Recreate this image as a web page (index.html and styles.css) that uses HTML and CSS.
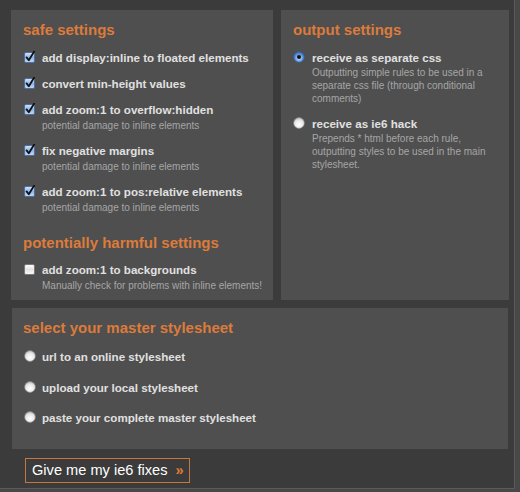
FILE: index.html
```html
<!DOCTYPE html>
<html>
<head>
<meta charset="utf-8">
<link rel="stylesheet" href="styles.css">
</head>
<body>
<div class="frame">
  <div class="top">
    <div class="panel panel-left">
      <h2 class="heading">safe settings</h2>
      <div class="opt">
        <span class="box checked"><svg viewBox="0 0 12 12" width="12" height="12"><defs><linearGradient id="cb" x1="0" y1="0" x2="0" y2="1"><stop offset="0" stop-color="#d6e6fb"/><stop offset="0.5" stop-color="#8eb6ea"/><stop offset="1" stop-color="#c3dbf7"/></linearGradient></defs><rect x="0.5" y="1.5" width="10" height="10" rx="1.5" fill="url(#cb)" stroke="#4f6f9e"/><path d="M2.6 6.4 L4.8 9.2 L10.2 0.6" fill="none" stroke="#111" stroke-width="1.8" stroke-linecap="round" stroke-linejoin="round"/></svg></span>
        <div class="txt"><div class="label">add display:inline to floated elements</div></div>
      </div>
      <div class="opt">
        <span class="box checked"><svg viewBox="0 0 12 12" width="12" height="12"><rect x="0.5" y="1.5" width="10" height="10" rx="1.5" fill="url(#cb)" stroke="#4f6f9e"/><path d="M2.6 6.4 L4.8 9.2 L10.2 0.6" fill="none" stroke="#111" stroke-width="1.8" stroke-linecap="round" stroke-linejoin="round"/></svg></span>
        <div class="txt"><div class="label">convert min-height values</div></div>
      </div>
      <div class="opt">
        <span class="box checked"><svg viewBox="0 0 12 12" width="12" height="12"><rect x="0.5" y="1.5" width="10" height="10" rx="1.5" fill="url(#cb)" stroke="#4f6f9e"/><path d="M2.6 6.4 L4.8 9.2 L10.2 0.6" fill="none" stroke="#111" stroke-width="1.8" stroke-linecap="round" stroke-linejoin="round"/></svg></span>
        <div class="txt"><div class="label">add zoom:1 to overflow:hidden</div><div class="sub">potential damage to inline elements</div></div>
      </div>
      <div class="opt">
        <span class="box checked"><svg viewBox="0 0 12 12" width="12" height="12"><rect x="0.5" y="1.5" width="10" height="10" rx="1.5" fill="url(#cb)" stroke="#4f6f9e"/><path d="M2.6 6.4 L4.8 9.2 L10.2 0.6" fill="none" stroke="#111" stroke-width="1.8" stroke-linecap="round" stroke-linejoin="round"/></svg></span>
        <div class="txt"><div class="label">fix negative margins</div><div class="sub">potential damage to inline elements</div></div>
      </div>
      <div class="opt">
        <span class="box checked"><svg viewBox="0 0 12 12" width="12" height="12"><rect x="0.5" y="1.5" width="10" height="10" rx="1.5" fill="url(#cb)" stroke="#4f6f9e"/><path d="M2.6 6.4 L4.8 9.2 L10.2 0.6" fill="none" stroke="#111" stroke-width="1.8" stroke-linecap="round" stroke-linejoin="round"/></svg></span>
        <div class="txt"><div class="label">add zoom:1 to pos:relative elements</div><div class="sub">potential damage to inline elements</div></div>
      </div>
      <h2 class="heading heading-2">potentially harmful settings</h2>
      <div class="opt">
        <span class="box"><svg viewBox="0 0 12 12" width="12" height="12"><defs><linearGradient id="ub" x1="0" y1="0" x2="0" y2="1"><stop offset="0" stop-color="#ffffff"/><stop offset="0.5" stop-color="#e4e4e4"/><stop offset="1" stop-color="#fafafa"/></linearGradient></defs><rect x="0.5" y="1.5" width="10" height="10" rx="1.5" fill="url(#ub)" stroke="#7a7a7a"/></svg></span>
        <div class="txt"><div class="label">add zoom:1 to backgrounds</div><div class="sub">Manually check for problems with inline elements!</div></div>
      </div>
    </div>
    <div class="panel panel-right">
      <h2 class="heading">output settings</h2>
      <div class="opt ropt">
        <span class="radio"><svg viewBox="0 0 12 12" width="12" height="12"><defs><radialGradient id="rs" cx="0.5" cy="0.6" r="0.6"><stop offset="0" stop-color="#d8ecff"/><stop offset="0.6" stop-color="#5d95dc"/><stop offset="1" stop-color="#2f5fa8"/></radialGradient></defs><circle cx="6" cy="6" r="5.4" fill="url(#rs)" stroke="#3a5c91" stroke-width="0.8"/><circle cx="6" cy="6" r="2" fill="#111"/></svg></span>
        <div class="txt"><div class="label">receive as separate css</div><div class="desc">Outputting simple rules to be used in a separate css file (through conditional comments)</div></div>
      </div>
      <div class="opt ropt">
        <span class="radio"><svg viewBox="0 0 12 12" width="12" height="12"><defs><radialGradient id="ru" cx="0.5" cy="0.65" r="0.6"><stop offset="0" stop-color="#ffffff"/><stop offset="0.7" stop-color="#e6e6e6"/><stop offset="1" stop-color="#bdbdbd"/></radialGradient></defs><circle cx="6" cy="6" r="5.4" fill="url(#ru)" stroke="#8a8a8a" stroke-width="0.6"/></svg></span>
        <div class="txt"><div class="label">receive as ie6 hack</div><div class="desc">Prepends * html before each rule, outputting styles to be used in the main stylesheet.</div></div>
      </div>
    </div>
  </div>
  <div class="panel panel-bottom">
    <h2 class="heading">select your master stylesheet</h2>
    <div class="opt bopt">
      <span class="radio"><svg viewBox="0 0 12 12" width="12" height="12"><circle cx="6" cy="6" r="5.4" fill="url(#ru)" stroke="#8a8a8a" stroke-width="0.6"/></svg></span>
      <div class="txt"><div class="label">url to an online stylesheet</div></div>
    </div>
    <div class="opt bopt">
      <span class="radio"><svg viewBox="0 0 12 12" width="12" height="12"><circle cx="6" cy="6" r="5.4" fill="url(#ru)" stroke="#8a8a8a" stroke-width="0.6"/></svg></span>
      <div class="txt"><div class="label">upload your local stylesheet</div></div>
    </div>
    <div class="opt bopt">
      <span class="radio"><svg viewBox="0 0 12 12" width="12" height="12"><circle cx="6" cy="6" r="5.4" fill="url(#ru)" stroke="#8a8a8a" stroke-width="0.6"/></svg></span>
      <div class="txt"><div class="label">paste your complete master stylesheet</div></div>
    </div>
  </div>
  <div class="actions">
    <button class="go">Give me my ie6 fixes <span class="arrows">»</span></button>
  </div>
</div>
</body>
</html>
```

FILE: styles.css
```css
html, body {
  margin: 0;
  padding: 0;
}
body {
  background: #484848;
  font-family: "Liberation Sans", Arial, sans-serif;
  width: 520px;
  height: 492px;
  overflow: hidden;
}
.frame {
  box-sizing: border-box;
  width: 515px;
  height: 489px;
  background: #3b3b3b;
  border-right: 1px solid #5a5a5a;
  border-bottom: 1px solid #5a5a5a;
  padding: 10px 5px 0 11px;
}
.top {
  display: flex;
  gap: 8px;
  height: 290px;
}
.panel {
  box-sizing: border-box;
  background: #4f4f4f;
  padding: 11px 12px 0 12px;
}
.panel-left {
  width: 262px;
}
.panel-right {
  width: 228px;
}
.panel-bottom {
  margin: 8px 0 0 1px;
  padding-left: 11px;
  width: 496px;
  height: 141px;
}
.heading {
  margin: 0;
  font-size: 15px;
  line-height: 18px;
  font-weight: bold;
  color: #dc7b3b;
}
.heading-2 {
  margin-top: 19px;
}
.opt {
  display: flex;
  align-items: flex-start;
  margin-top: 11px;
}
.heading + .opt {
  margin-top: 11px;
}
.heading-2 + .opt {
  margin-top: 10px;
}
.panel-left .opt + .opt {
  margin-top: 10px;
}
.box, .radio {
  flex: none;
  width: 12px;
  height: 12px;
  margin-top: 1px;
  margin-left: 1px;
  margin-right: 6px;
  display: block;
}
.box svg, .radio svg {
  display: block;
}
.label {
  font-size: 11.6px;
  line-height: 16px;
  font-weight: bold;
  color: #e0e0e0;
  white-space: nowrap;
}
.sub {
  font-size: 10px;
  line-height: 15px;
  color: #a6a6a6;
  white-space: nowrap;
}
.ropt .radio {
  margin-right: 7px;
  margin-left: 0;
}
.desc {
  font-size: 10px;
  line-height: 13px;
  color: #a6a6a6;
  width: 185px;
}
.panel-right .opt + .opt {
  margin-top: 11px;
}
.bopt .radio {
  margin-left: 1px;
  margin-right: 6px;
}
.panel-bottom .heading + .opt {
  margin-top: 12px;
}
.panel-bottom .opt + .opt {
  margin-top: 14.5px;
}
.actions {
  padding: 9px 0 0 14px;
}
.go {
  display: block;
  box-sizing: border-box;
  height: 25px;
  width: 165px;
  margin: 0;
  padding: 0 0 0 6px;
  background: transparent;
  border: 1px solid #c8773c;
  color: #ffffff;
  font-family: "Liberation Sans", Arial, sans-serif;
  font-size: 14.6px;
  line-height: 23px;
  text-align: left;
}
.arrows {
  color: #e07a34;
  font-weight: bold;
  margin-left: 4px;
}
```
